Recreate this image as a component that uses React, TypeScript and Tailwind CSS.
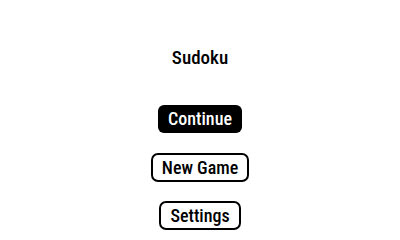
import React from "react";

export default function App() {
  return (
    <div
      className="w-[400px] h-[240px] bg-white flex flex-col items-center text-black"
      style={{ fontFamily: '"Roboto Condensed", Roboto, "Liberation Sans", sans-serif' }}
    >
      <div className="mt-[47px] h-[22px] text-[19px] leading-[22px] font-medium">Sudoku</div>
      <button className="mt-[36px] h-[28px] px-[10px] bg-black text-white rounded-[6px] text-[18px] leading-[28px] font-medium">
        Continue
      </button>
      <button className="mt-[20px] h-[29px] px-[9px] bg-white border-2 border-black rounded-[7px] text-[18px] leading-[25px] font-medium">
        New Game
      </button>
      <button className="mt-[19px] h-[29px] px-[9px] bg-white border-2 border-black rounded-[7px] text-[18px] leading-[25px] font-medium">
        Settings
      </button>
    </div>
  );
}
